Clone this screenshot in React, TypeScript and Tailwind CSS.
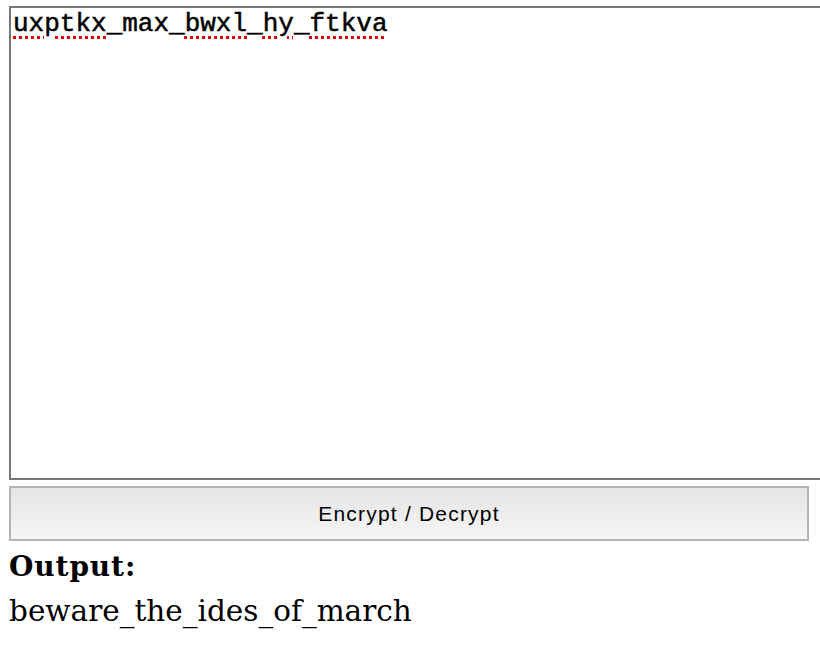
const words = [
  { text: "uxptkx", bad: true },
  { text: "_", bad: false },
  { text: "max", bad: false },
  { text: "_", bad: false },
  { text: "bwxl", bad: true },
  { text: "_", bad: false },
  { text: "hy", bad: true },
  { text: "_", bad: false },
  { text: "ftkva", bad: true },
];

export default function App() {
  return (
    <div className="w-[820px] h-[646px] overflow-hidden bg-white pl-[9px] pt-[6px]">
      {/* input box, runs off the right edge */}
      <div className="w-[830px] h-[474px] border-2 border-[#767676] bg-white px-[2px] pt-[2px]">
        <div className="font-['Liberation_Mono',monospace] text-[26px] leading-[28px] text-black [-webkit-text-stroke:0.5px_black]">
          {words.map((w, i) => (
            <span
              key={i}
              className={
                w.bad
                  ? "underline decoration-dotted decoration-[#e60000] decoration-[3px] underline-offset-[5px]"
                  : ""
              }
            >
              {w.text}
            </span>
          ))}
        </div>
      </div>

      <button className="mt-[6px] w-[800px] h-[55px] border-2 border-[#b4b4b4] bg-gradient-to-b from-[#e4e4e4] to-[#f6f6f6] font-['Liberation_Sans',sans-serif] text-[21px] tracking-[1.2px] text-black">
        Encrypt / Decrypt
      </button>

      <div className="font-['DejaVu_Serif',serif] text-black">
        <h3 className="mt-[8px] text-[28px] font-bold leading-[36px] tracking-[0.9px]">Output:</h3>
        <p className="mt-[6px] text-[29.5px] leading-[40px]">beware_the_ides_of_march</p>
      </div>
    </div>
  );
}
